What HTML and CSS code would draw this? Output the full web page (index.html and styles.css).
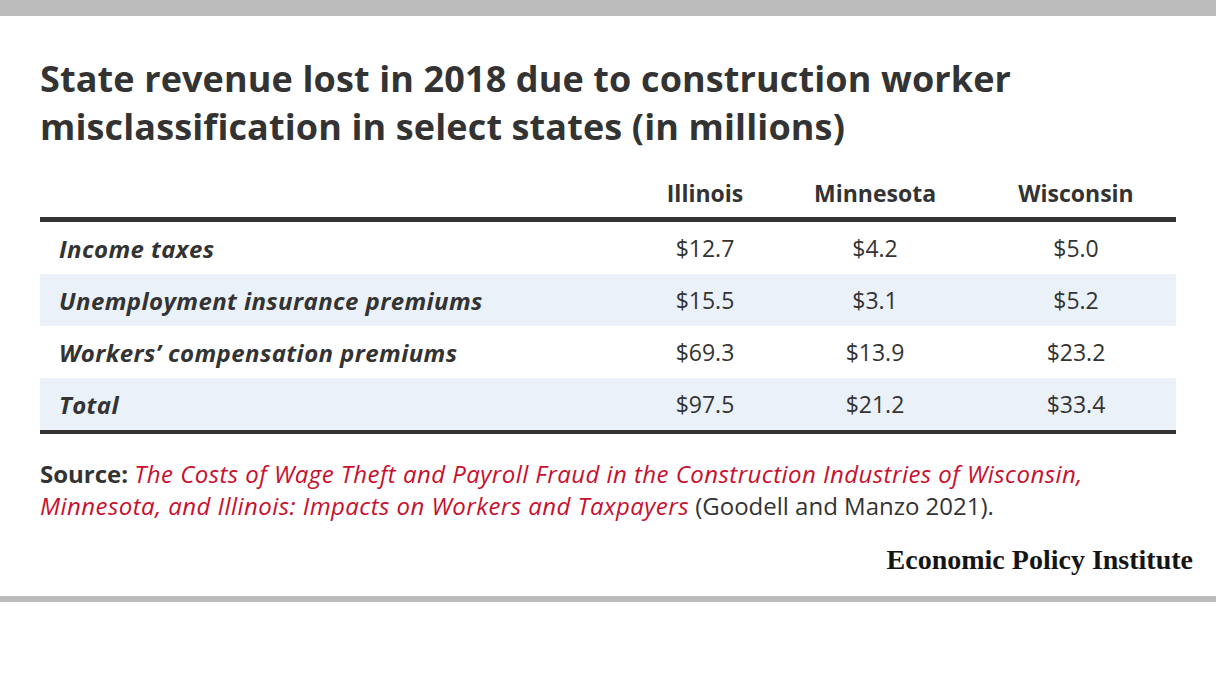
FILE: index.html
```html
<!DOCTYPE html>
<html>
<head>
<meta charset="utf-8">
<link rel="stylesheet" href="styles.css">
</head>
<body>
<div class="topbar"></div>
<main class="chart">
  <h1 class="title">State revenue lost in 2018 due to construction worker misclassification in select states (in millions)</h1>
  <div class="table">
    <div class="row head">
      <div class="cell label"></div>
      <div class="cell num">Illinois</div>
      <div class="cell num">Minnesota</div>
      <div class="cell num last">Wisconsin</div>
    </div>
    <div class="row">
      <div class="cell label">Income taxes</div>
      <div class="cell num">$12.7</div>
      <div class="cell num">$4.2</div>
      <div class="cell num last">$5.0</div>
    </div>
    <div class="row alt">
      <div class="cell label">Unemployment insurance premiums</div>
      <div class="cell num">$15.5</div>
      <div class="cell num">$3.1</div>
      <div class="cell num last">$5.2</div>
    </div>
    <div class="row">
      <div class="cell label">Workers’ compensation premiums</div>
      <div class="cell num">$69.3</div>
      <div class="cell num">$13.9</div>
      <div class="cell num last">$23.2</div>
    </div>
    <div class="row alt final">
      <div class="cell label">Total</div>
      <div class="cell num">$97.5</div>
      <div class="cell num">$21.2</div>
      <div class="cell num last">$33.4</div>
    </div>
  </div>
  <p class="source"><b>Source:</b> <i class="ref">The Costs of Wage Theft and Payroll Fraud in the Construction Industries of Wisconsin, Minnesota, and Illinois: Impacts on Workers and Taxpayers</i> (Goodell and Manzo 2021).</p>
  <div class="brand">Economic Policy Institute</div>
</main>
<div class="bottombar"></div>
</body>
</html>
```
FILE: styles.css
```css
html, body {
  margin: 0;
  padding: 0;
  background: #ffffff;
}
body {
  font-family: "Open Sans", "Liberation Sans", sans-serif;
  color: #333333;
  width: 1216px;
}
.topbar {
  height: 16px;
  background: #bcbcbc;
}
.chart {
  padding: 0 40px;
}
.title {
  margin: 0;
  padding-top: 39px;
  font-size: 36px;
  line-height: 48px;
  font-weight: 700;
  letter-spacing: 0.12px;
  color: #333333;
  width: 1020px;
}
.table {
  width: 1136px;
}
.row {
  display: grid;
  grid-template-columns: 580px 170px 170px 216px;
  height: 52px;
  align-items: center;
  font-size: 23px;
}
.row.head {
  box-sizing: border-box;
  height: 71px;
  align-items: start;
  padding-top: 27px;
  line-height: 30px;
  border-bottom: 5px solid #333333;
  font-weight: 700;
}
.row.alt {
  background: #eaf1f9;
}
.row.final {
  box-sizing: content-box;
  border-bottom: 4px solid #333333;
}
.cell.label {
  padding-left: 19px;
  font-weight: 700;
  font-style: italic;
  font-size: 24px;
  letter-spacing: 0.4px;
}
.cell.num {
  text-align: center;
}
.cell.num.last {
  padding-left: 16px;
}
.source {
  margin: 24px 0 0 0;
  font-size: 24px;
  line-height: 32px;
  color: #333333;
}
.source b {
  font-weight: 700;
}
.ref {
  color: #c8102e;
  letter-spacing: 0.45px;
}
.brand {
  margin-top: 23px;
  margin-right: -17px;
  text-align: right;
  font-family: "Liberation Serif", "DejaVu Serif", serif;
  font-weight: 700;
  font-size: 28px;
  line-height: 30px;
  color: #151515;
}
.bottombar {
  margin-top: 21px;
  height: 6px;
  background: #bcbcbc;
}
```
